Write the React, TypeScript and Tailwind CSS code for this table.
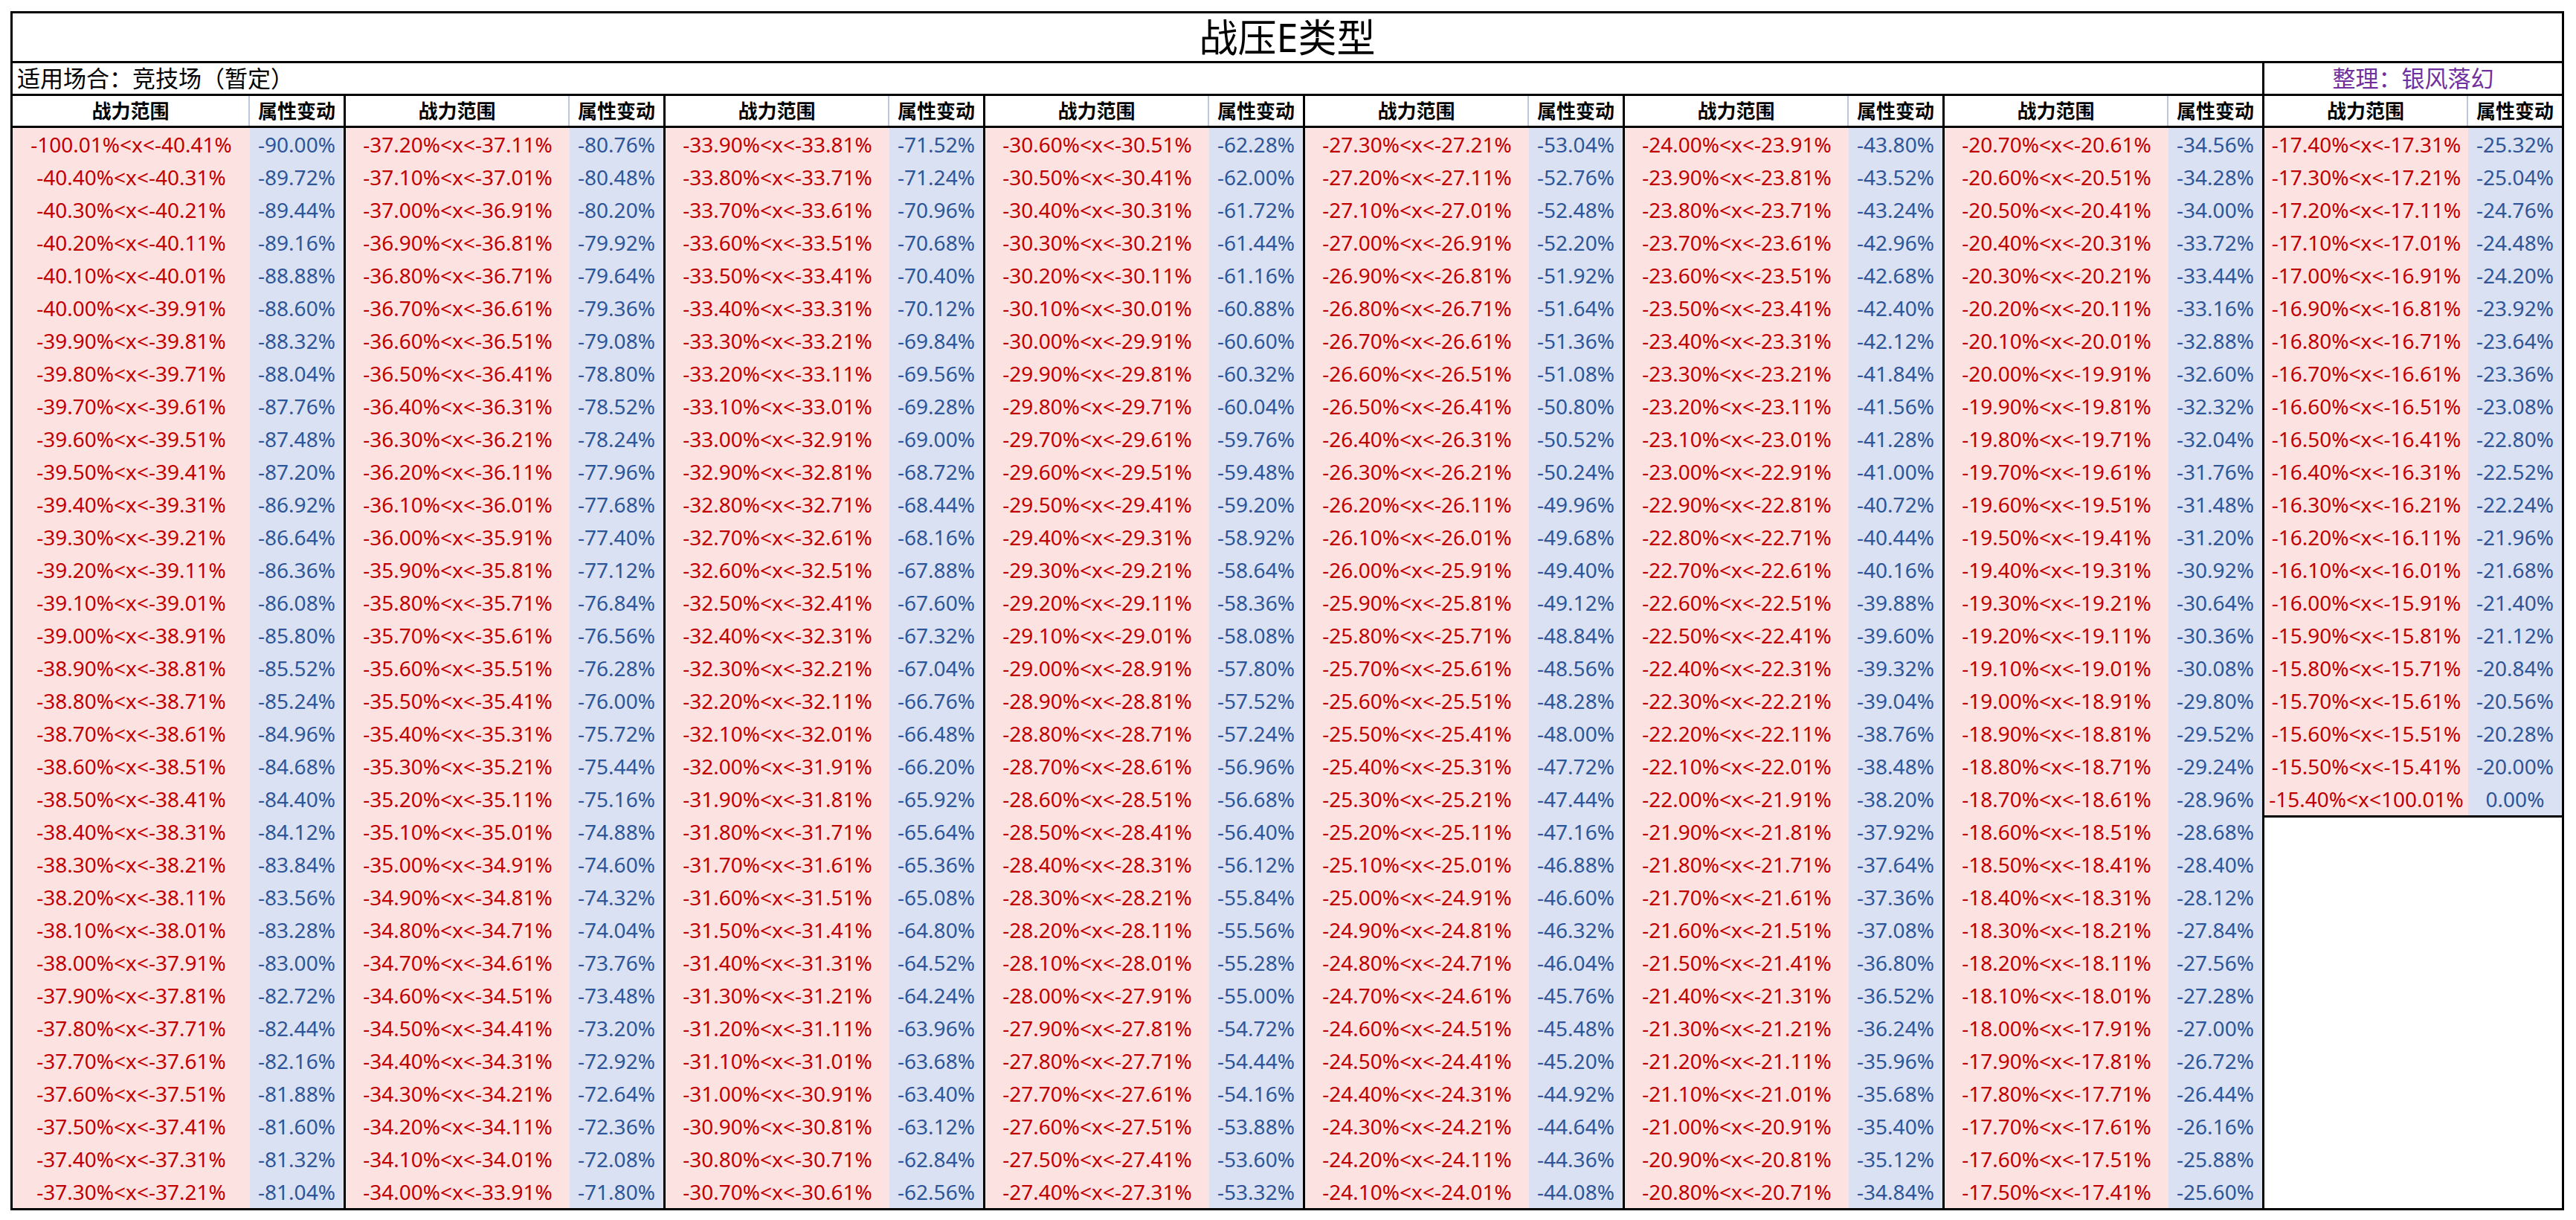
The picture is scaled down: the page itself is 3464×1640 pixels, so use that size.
const PINK = "bg-[#fde2e2]";
const BLUE = "bg-[#d9e1f2]";

type Row = { range: string; value: string };

const fmt = (h: number) => (h / 100).toFixed(2);

// 252 rows total, k = 0 .. 251
const rows: Row[] = Array.from({ length: 252 }, (_, k) => {
  if (k === 0) return { range: "-100.01%<x<-40.41%", value: "-90.00%" };
  if (k === 251) return { range: "-15.40%<x<100.01%", value: "0.00%" };
  const a = 4050 - 10 * k;
  return {
    range: `-${fmt(a)}%<x<-${fmt(a - 9)}%`,
    value: `${fmt(-9000 + 28 * k)}%`,
  };
});

const groups: Row[][] = [];
for (let i = 0; i < rows.length; i += 33) groups.push(rows.slice(i, i + 33));

const widths = [
  { range: "w-[319px]", value: "w-[126px]" },
  { range: "w-[301px]", value: "w-[126px]" },
  { range: "w-[301px]", value: "w-[126px]" },
  { range: "w-[301px]", value: "w-[126px]" },
  { range: "w-[301px]", value: "w-[126px]" },
  { range: "w-[301px]", value: "w-[126px]" },
  { range: "w-[301px]", value: "w-[126px]" },
  { range: "w-[274px]", value: "w-[126px]" },
];

function Group({ data, idx }: { data: Row[]; idx: number }) {
  const w = widths[idx];
  const last = idx === widths.length - 1;
  return (
    <div className={`flex flex-col ${last ? "" : "border-r-[3px] border-black"}`}>
      <div className="flex h-[43px] border-b-[3px] border-black text-[26px] font-bold text-black">
        <div className={`${w.range} flex items-center justify-center border-r-2 border-[#bcc6dc]`}>战力范围</div>
        <div className={`${w.value} flex items-center justify-center`}>属性变动</div>
      </div>
      <div className={last ? "border-b-[3px] border-black" : ""}>
        {data.map((r) => (
          <div key={r.range} className="flex h-[44px] text-[28px]">
            <div className={`${w.range} ${PINK} flex items-center justify-center text-[#c00000] whitespace-nowrap`}>
              {r.range}
            </div>
            <div className={`${w.value} ${BLUE} flex items-center justify-center text-[#2f5597]`}>
              {r.value}
            </div>
          </div>
        ))}
      </div>
    </div>
  );
}

export default function App() {
  return (
    <div
      className="min-h-screen bg-white pt-[15px] pl-[14px]"
      style={{ fontFamily: '"Noto Sans", "Noto Sans CJK SC", sans-serif' }}
    >
      <div className="w-[3434px] border-[3px] border-black">
        <div className="flex h-[67px] items-center justify-center border-b-[3px] border-black text-[52px] text-black">
          战压E类型
        </div>
        <div className="flex h-[44px] border-b-[3px] border-black text-[31px]">
          <div className="flex w-[3028px] items-center border-r-[3px] border-black pl-[6px] text-black">
            适用场合：竞技场（暂定）
          </div>
          <div className="flex flex-1 items-center justify-center text-[#7030a0]">整理：银风落幻</div>
        </div>
        <div className="flex items-start">
          {groups.map((g, i) => (
            <Group key={i} data={g} idx={i} />
          ))}
        </div>
      </div>
    </div>
  );
}
